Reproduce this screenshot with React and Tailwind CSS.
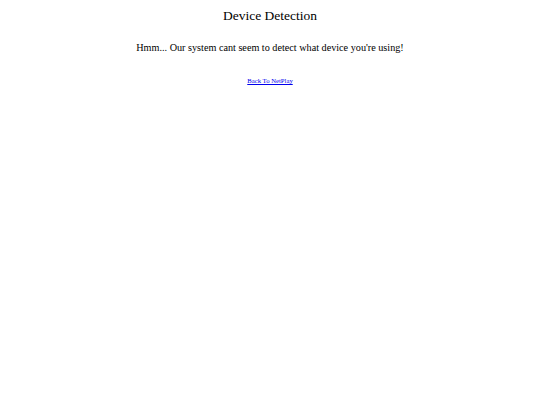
export default function App() {
  return (
    <div className="min-h-[405px] bg-white text-black text-center font-['Liberation_Serif',serif]">
      <h1 className="pt-[8px] text-[13.5px] leading-[16px]">Device Detection</h1>
      <p className="mt-[18px] text-[10.2px] leading-[12px]">
        Hmm... Our system cant seem to detect what device you're using!
      </p>
      <div className="mt-[23px] text-[6.7px] leading-[8px]">
        <a href="#" className="text-[#0000ee] underline">
          Back To NetPlay
        </a>
      </div>
    </div>
  )
}
